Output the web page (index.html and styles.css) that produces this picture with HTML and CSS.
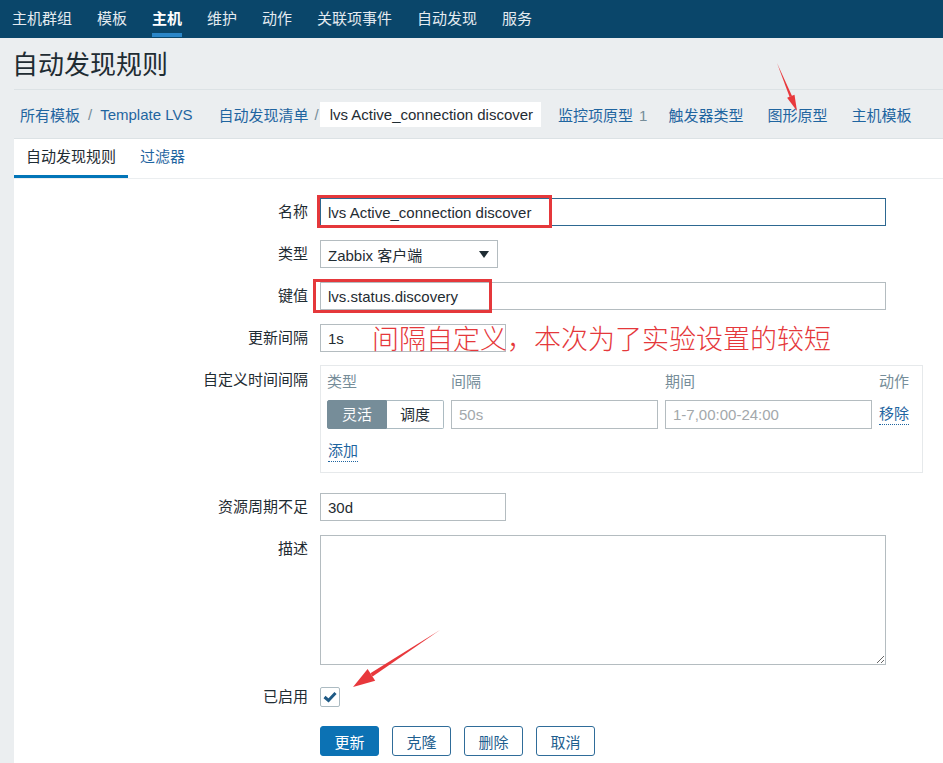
FILE: index.html
```html
<!DOCTYPE html>
<html lang="zh">
<head>
<meta charset="utf-8">
<title>自动发现规则</title>
<link rel="stylesheet" href="styles.css">
</head>
<body>
<nav class="topnav">
  <a class="nav-item">主机群组</a>
  <a class="nav-item">模板</a>
  <a class="nav-item active">主机</a>
  <a class="nav-item">维护</a>
  <a class="nav-item">动作</a>
  <a class="nav-item">关联项事件</a>
  <a class="nav-item">自动发现</a>
  <a class="nav-item">服务</a>
</nav>

<header class="header">
  <h1 class="page-title">自动发现规则</h1>
</header>

<div class="crumbs">
  <div class="crumb-group">
    <a class="link">所有模板</a><span class="sep">/</span><a class="link">Template LVS</a>
  </div>
  <div class="crumb-group group-2">
    <a class="link">自动发现清单</a><span class="sep sep-tight">/</span><span class="crumb-current">lvs Active_connection discover</span>
  </div>
  <a class="link crumb-item first-tail">监控项原型<span class="count">1</span></a>
  <a class="link crumb-item after-count">触发器类型</a>
  <a class="link crumb-item">图形原型</a>
  <a class="link crumb-item">主机模板</a>
</div>

<main class="panel">
  <div class="tabs">
    <span class="tab active">自动发现规则</span>
    <a class="tab link">过滤器</a>
  </div>

  <form class="form">
    <div class="row">
      <label class="label">名称</label>
      <input class="input input-wide input-focus" type="text" value="lvs Active_connection discover">
    </div>
    <div class="row">
      <label class="label">类型</label>
      <div class="select">
        <span>Zabbix 客户端</span>
        <svg class="select-arrow" width="10" height="7" viewBox="0 0 10 7"><path d="M0 0 L10 0 L5 7 Z" fill="#1f2c33"/></svg>
      </div>
    </div>
    <div class="row">
      <label class="label">键值</label>
      <input class="input input-wide" type="text" value="lvs.status.discovery">
    </div>
    <div class="row">
      <label class="label">更新间隔</label>
      <input class="input input-short" type="text" value="1s">
    </div>
    <div class="row">
      <label class="label">自定义时间间隔</label>
      <div class="intervals">
        <div class="int-grid">
          <span class="int-head">类型</span>
          <span class="int-head">间隔</span>
          <span class="int-head">期间</span>
          <span class="int-head">动作</span>
          <div class="segmented">
            <span class="seg seg-on">灵活</span>
            <span class="seg">调度</span>
          </div>
          <input class="input int-input" type="text" placeholder="50s">
          <input class="input int-input" type="text" placeholder="1-7,00:00-24:00">
          <a class="link dotted remove">移除</a>
        </div>
        <a class="link dotted add">添加</a>
      </div>
    </div>
    <div class="row row-lost">
      <label class="label">资源周期不足</label>
      <input class="input input-short" type="text" value="30d">
    </div>
    <div class="row">
      <label class="label">描述</label>
      <textarea class="textarea"></textarea>
    </div>
    <div class="row row-check">
      <label class="label label-check">已启用</label>
      <span class="checkbox">
        <svg width="14" height="12" viewBox="0 0 14 12"><path d="M1.5 6 L5.5 9.5 L12.5 2" fill="none" stroke="#1f5a85" stroke-width="3"/></svg>
      </span>
    </div>
    <div class="row row-buttons">
      <span class="label"></span>
      <div class="buttons">
        <button type="button" class="btn btn-primary">更新</button>
        <button type="button" class="btn">克隆</button>
        <button type="button" class="btn">删除</button>
        <button type="button" class="btn">取消</button>
      </div>
    </div>
  </form>
</main>

<div class="mark mark-name"></div>
<div class="mark mark-key"></div>
<div class="note">间隔自定义，本次为了实验设置的较短</div>

<svg class="arrows" width="943" height="763" viewBox="0 0 943 763">
  <polygon points="777,63 789.6,96.9 792.0,95.9" fill="#e8383c"/>
  <polygon points="797,111 787.1,97.7 794.5,94.7" fill="#e8383c"/>
  <polygon points="440,630 370.4,673.2 372.6,676.6" fill="#e8383c"/>
  <polygon points="353,687 367.6,669.0 375.2,680.8" fill="#e8383c"/>
</svg>
</body>
</html>
```

FILE: styles.css
```css
* { box-sizing: border-box; }

body {
  margin: 0;
  background: #ebeef0;
  font-family: "Liberation Sans", "Noto Sans CJK SC", sans-serif;
  font-size: 15px;
  color: #1f2c33;
  position: relative;
  min-height: 763px;
  overflow: hidden;
}

.link { color: #1f65a0; text-decoration: none; }

/* top navigation */
.topnav {
  height: 38px;
  background: #0a466a;
  display: flex;
  align-items: flex-start;
  gap: 25px;
  padding-left: 12px;
}
.nav-item {
  height: 37px;
  line-height: 29px;
  border-top: 4px solid transparent;
  border-bottom: 4px solid transparent;
  color: #e4ebf0;
  white-space: nowrap;
}
.nav-item.active {
  color: #ffffff;
  font-weight: bold;
  border-bottom-color: #2a86c8;
}

/* header */
.header {
  margin-left: 14px;
  height: 52px;
  border-bottom: 1px solid #dce2e5;
}
.page-title {
  margin: 0 0 0 -2px;
  padding-top: 11px;
  font-size: 26px;
  font-weight: normal;
  line-height: 32px;
  color: #1f2c33;
}

/* breadcrumbs */
.crumbs {
  margin-left: 14px;
  height: 49px;
  border-bottom: 1px solid #dce2e5;
  display: flex;
  align-items: center;
  padding-left: 6px;
  white-space: nowrap;
}
.crumb-group { display: flex; align-items: center; }
.group-2 { margin-left: 26px; }
.sep { margin: 0 8px; color: #768d99; }
.sep.sep-tight { margin: 0 0 0 6px; }
.crumb-current {
  background: #ffffff;
  height: 25px;
  line-height: 25px;
  padding: 0 8px 0 10px;
  margin-left: 1px;
  color: #1f2c33;
}
.crumb-item { margin-left: 24px; }
.first-tail { margin-left: 17px; }
.after-count { margin-left: 21px; }
.count { margin-left: 6px; color: #768d99; }

/* panel */
.panel {
  margin-left: 14px;
  background: #ffffff;
  min-height: 640px;
}
.tabs {
  display: flex;
  border-bottom: 1px solid #ebeef0;
}
.tab {
  padding: 0 12px;
  line-height: 36px;
  border-bottom: 3px solid transparent;
}
.tab.active {
  border-bottom-color: #0275b8;
  color: #1f2c33;
}

/* form */
.form {
  display: flex;
  flex-direction: column;
  gap: 14px;
  padding-top: 19px;
  padding-bottom: 20px;
}
.row {
  display: flex;
  gap: 12px;
  align-items: flex-start;
}
.row-lost { margin-top: 6px; }
.row-check { margin-top: 8px; }
.row-buttons { margin-top: 5px; }
.label {
  width: 294px;
  flex: none;
  text-align: right;
  line-height: 28px;
  color: #1f2c33;
}
.label-check { line-height: 20px; }

.input {
  height: 28px;
  border: 1px solid #b4bcc0;
  padding: 0 7px;
  font: inherit;
  color: #1f2c33;
  background: #ffffff;
  outline: none;
}
.input::placeholder { color: #a3a8ab; }
.input-wide { width: 566px; }
.input-short { width: 186px; }
.input-focus { border-color: #2d6891; }

.select {
  width: 178px;
  height: 28px;
  border: 1px solid #b4bcc0;
  padding: 0 8px 0 7px;
  display: flex;
  align-items: center;
  justify-content: space-between;
}
.select-arrow { margin-top: 1px; }

/* custom intervals */
.intervals {
  width: 603px;
  margin-top: -1px;
  border: 1px solid #e6e9eb;
  padding: 7px 7px 10px 6px;
}
.int-grid {
  display: grid;
  grid-template-columns: 117px 207px 207px auto;
  column-gap: 7px;
  row-gap: 9px;
  align-items: center;
}
.int-head {
  line-height: 18px;
  color: #768d99;
}
.segmented { display: flex; height: 29px; }
.seg {
  flex: none;
  line-height: 27px;
  border: 1px solid #acbbc2;
  text-align: center;
  background: #ffffff;
  color: #1f2c33;
}
.seg:first-child { width: 60px; border-radius: 2px 0 0 2px; }
.seg:last-child { width: 57px; border-left: none; border-radius: 0 2px 2px 0; }
.seg.seg-on { background: #768d99; border-color: #768d99; color: #ffffff; }
.int-input { height: 29px; width: 207px; }
.dotted {
  border-bottom: 1px dotted #1f65a0;
  line-height: 20px;
  justify-self: start;
}
.add {
  display: inline-block;
  margin-top: 12px;
  margin-left: 1px;
}

.textarea {
  width: 566px;
  height: 130px;
  border: 1px solid #b4bcc0;
  font: inherit;
}

.checkbox {
  width: 20px;
  height: 20px;
  border: 1px solid #acbbc2;
  border-radius: 2px;
  display: flex;
  align-items: center;
  justify-content: center;
}

.buttons { display: flex; gap: 13px; }
.btn {
  width: 59px;
  height: 30px;
  border: 1px solid #2f6c99;
  border-radius: 3px;
  background: #ffffff;
  color: #1f5f8f;
  font: inherit;
  padding: 0;
}
.btn-primary {
  background: #0c72b4;
  border-color: #0c72b4;
  color: #ffffff;
}

/* annotations laid over the screenshot */
.mark {
  position: absolute;
  border: 3px solid #e5383b;
}
.mark-name { left: 317px; top: 195px; width: 235px; height: 33px; }
.mark-key { left: 313px; top: 279px; width: 179px; height: 34px; }
.note {
  position: absolute;
  left: 372px;
  top: 322px;
  font-family: "Noto Sans CJK SC", sans-serif;
  font-size: 27px;
  font-weight: 300;
  line-height: 32px;
  color: #e5383b;
  white-space: nowrap;
}
.arrows {
  position: absolute;
  left: 0;
  top: 0;
  pointer-events: none;
}
```
